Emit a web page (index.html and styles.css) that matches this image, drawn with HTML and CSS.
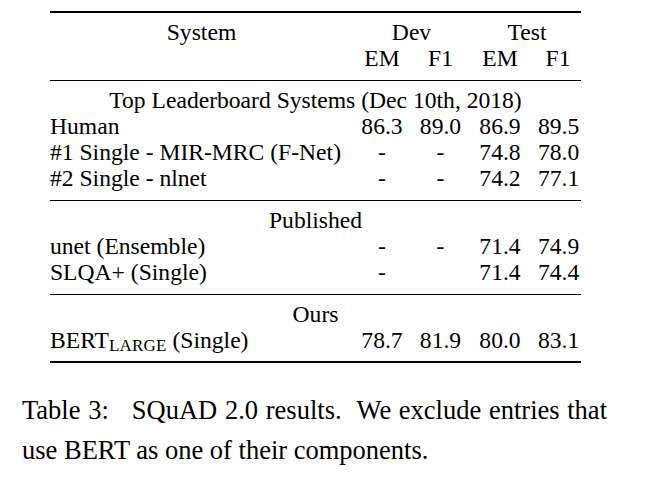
FILE: index.html
```html
<!DOCTYPE html>
<html lang="en">
<head>
<meta charset="utf-8">
<title>SQuAD 2.0 results</title>
<link rel="stylesheet" href="styles.css">
</head>
<body>
<main class="page">
  <table class="results">
    <colgroup>
      <col class="c-sys">
      <col class="c-dem">
      <col class="c-df1">
      <col class="c-tem">
      <col class="c-tf1">
    </colgroup>
    <thead class="sec sec-head">
      <tr>
        <th class="sys-h">System</th>
        <th colspan="2">Dev</th>
        <th colspan="2" class="test-h">Test</th>
      </tr>
      <tr>
        <th></th>
        <th>EM</th>
        <th>F1</th>
        <th>EM</th>
        <th class="last">F1</th>
      </tr>
    </thead>
    <tbody class="sec">
      <tr><td colspan="5" class="group">Top Leaderboard Systems (Dec 10th, 2018)</td></tr>
      <tr><td class="name">Human</td><td>86.3</td><td>89.0</td><td>86.9</td><td class="last">89.5</td></tr>
      <tr><td class="name">#1 Single - MIR-MRC (F-Net)</td><td>-</td><td>-</td><td>74.8</td><td class="last">78.0</td></tr>
      <tr><td class="name">#2 Single - nlnet</td><td>-</td><td>-</td><td>74.2</td><td class="last">77.1</td></tr>
    </tbody>
    <tbody class="sec">
      <tr><td colspan="5" class="group">Published</td></tr>
      <tr><td class="name">unet (Ensemble)</td><td>-</td><td>-</td><td>71.4</td><td class="last">74.9</td></tr>
      <tr><td class="name">SLQA+ (Single)</td><td>-</td><td></td><td>71.4</td><td class="last">74.4</td></tr>
    </tbody>
    <tbody class="sec sec-last">
      <tr><td colspan="5" class="group">Ours</td></tr>
      <tr><td class="name">BERT<sub class="sc">LARGE</sub> (Single)</td><td>78.7</td><td>81.9</td><td>80.0</td><td class="last">83.1</td></tr>
    </tbody>
  </table>
  <p class="caption">Table 3:&nbsp;&nbsp; SQuAD 2.0 results.&nbsp; We exclude entries that use BERT as one of their components.</p>
</main>
</body>
</html>
```
FILE: styles.css
```css
html, body {
  margin: 0;
  padding: 0;
  background: #ffffff;
}

body {
  font-family: "Liberation Serif", "Times New Roman", serif;
  color: #000000;
}

.page {
  display: flex;
  flex-direction: column;
  align-items: flex-start;
  padding-top: 11px;
}

.results {
  margin-left: 50px;
  width: 531px;
  table-layout: fixed;
  border-collapse: collapse;
  font-size: 23.6px;
  line-height: 26.3px;
}

.c-sys { width: 303px; }
.c-dem { width: 58px; }
.c-df1 { width: 59px; }
.c-tem { width: 60px; }
.c-tf1 { width: 51px; }

.results th,
.results td {
  padding: 0;
  text-align: center;
  font-weight: normal;
  white-space: nowrap;
  vertical-align: baseline;
}

.results .last {
  padding-left: 8px;
  padding-right: 3px;
}

.results .test-h {
  padding-left: 3px;
}

.results td.name {
  text-align: left;
}

.results td.group {
  text-align: center;
}

.sec {
  border-top: 1px solid #000;
}

.sec-head {
  border-top: 2px solid #000;
}

.sec-last {
  border-bottom: 2px solid #000;
}

.sec tr:first-child > * {
  padding-top: 6px;
}

.sec tr:last-child > * {
  padding-bottom: 8px;
}

.sc {
  font-size: 17px;
  vertical-align: -3px;
  line-height: 0;
  letter-spacing: 0.2px;
}

.caption {
  margin: 27px 0 0 22px;
  width: 585px;
  font-size: 26.5px;
  line-height: 40px;
  text-align: justify;
}
```
